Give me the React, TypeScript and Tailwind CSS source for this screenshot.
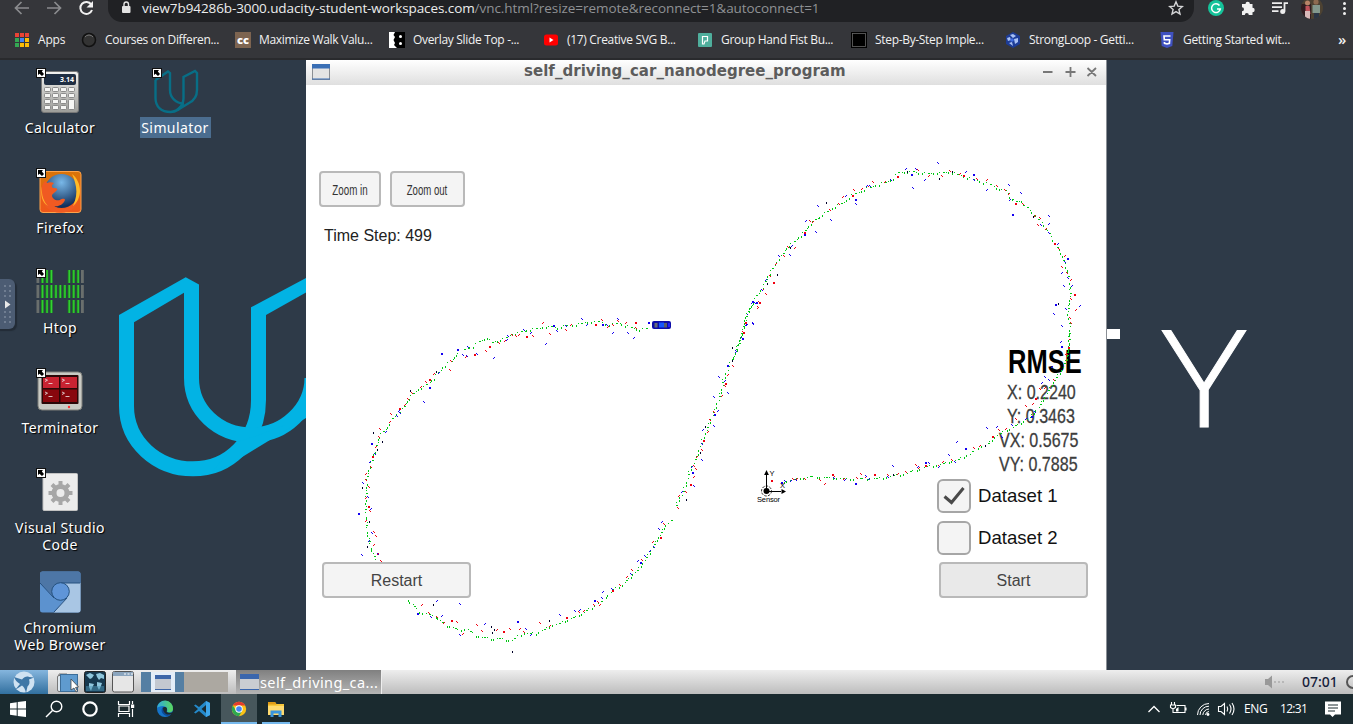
import React from "react";

/* ---------- trajectory data ---------- */
/* Each segment lists points in thirds of a pixel, measured from its origin. */
type Segment = {
  ox: number;
  oy: number;
  path: number[];
  lidar: number[];
  radar: number[];
  dark: number[];
};

const SEGMENTS: Segment[] = [
  {
    ox: 306,
    oy: 60,
    path: [476, 869, 500, 859, 511, 851, 527, 842, 543, 833, 560, 847, 583, 840, 601, 832, 620, 823, 655, 813, 690, 807, 720, 799, 755, 803, 800, 795, 845, 787, 878, 785, 910, 795, 940, 791, 975, 802, 1000, 809, 1030, 803],
    lidar: [550, 859, 581, 850, 599, 841, 620, 825, 632, 828, 640, 822, 661, 829, 681, 829, 712, 786, 733, 822, 780, 810, 796, 794, 868, 793, 888, 782, 906, 800, 922, 796, 938, 785, 962, 788, 989, 787, 992, 805],
    radar: [455, 867, 487, 862, 605, 837, 608, 828, 655, 810, 676, 817, 741, 795, 754, 813, 720, 851, 780, 799, 830, 779, 844, 793, 888, 792, 904, 797, 923, 818, 936, 778, 966, 819, 984, 833, 1026, 786],
    dark: [],
  },
  {
    ox: 720,
    oy: 60,
    path: [38, 898, 47, 878, 58, 850, 66, 820, 73, 790, 76, 770, 95, 738, 110, 708, 128, 682, 140, 658, 158, 625, 170, 605, 185, 588, 200, 565, 222, 545, 250, 520, 265, 497, 293, 475, 330, 450, 372, 426, 388, 412, 416, 396, 450, 382, 495, 367, 520, 355, 536, 338, 570, 335, 597, 338, 625, 342, 660, 338, 697, 337, 722, 347, 760, 358, 800, 370, 830, 384, 856, 393, 870, 410, 890, 425, 905, 424, 928, 450, 948, 472, 965, 488, 983, 512, 1003, 548, 1022, 578, 1035, 610, 1045, 640, 1051, 680, 1049, 720, 1043, 755, 1048, 790, 1048, 830, 1046, 860, 1042, 897],
    lidar: [71, 816, 79, 789, 114, 743, 118, 728, 140, 704, 130, 687, 160, 667, 151, 648, 169, 611, 192, 590, 205, 561, 225, 561, 253, 516, 272, 483, 280, 485, 331, 452, 359, 432, 371, 410, 396, 405, 404, 391, 426, 384, 445, 379, 461, 368, 496, 365, 531, 348, 595, 331, 629, 346, 666, 348, 692, 334, 721, 340, 729, 347, 772, 358, 802, 358, 833, 379, 855, 392, 869, 401, 886, 429, 911, 434, 945, 465, 960, 474, 954, 495, 979, 504, 1004, 551, 1018, 567, 1035, 585, 1027, 621, 1043, 641, 1054, 659, 1062, 704, 1054, 719, 1069, 748, 1052, 774, 1054, 790, 1047, 839, 1046, 863, 1039, 885],
    radar: [68, 834, 48, 873, 81, 793, 99, 792, 82, 763, 96, 726, 108, 728, 127, 692, 138, 657, 179, 590, 212, 585, 218, 555, 254, 524, 288, 517, 260, 480, 294, 438, 333, 480, 378, 407, 405, 418, 408, 432, 441, 375, 450, 379, 513, 360, 559, 324, 573, 342, 588, 327, 615, 359, 580, 385, 655, 310, 738, 333, 761, 342, 762, 360, 803, 387, 867, 375, 903, 399, 872, 417, 878, 463, 963, 497, 987, 489, 987, 470, 987, 519, 1014, 551, 1042, 595, 1037, 606, 1027, 637, 1045, 655, 1033, 679, 1056, 677, 1007, 734, 1038, 747, 1080, 735, 1003, 764, 1027, 799, 1023, 845, 1023, 858],
    dark: [38, 862, 142, 670, 172, 644, 210, 563, 320, 427, 659, 355, 697, 334, 941, 470, 1015, 730, 561, 334],
  },
  {
    ox: 740,
    oy: 330,
    path: [987, 10, 987, 50, 982, 85, 965, 120, 935, 165, 915, 200, 895, 233, 870, 262, 835, 285, 800, 300, 770, 315, 745, 342, 715, 352, 690, 372, 655, 390, 600, 403, 560, 410, 530, 420, 500, 430, 460, 437, 420, 445, 380, 446, 320, 446, 270, 443, 220, 441, 190, 443, 150, 450, 125, 456],
    lidar: [93, 450, 160, 448, 171, 446, 197, 447, 241, 452, 255, 461, 276, 433, 283, 439, 312, 445, 351, 444, 365, 433, 379, 438, 403, 432, 446, 437, 475, 431, 499, 427, 530, 407, 538, 412, 555, 406, 599, 408, 610, 395, 638, 391, 703, 355, 720, 345, 756, 318, 779, 300, 799, 295, 828, 267, 858, 230, 880, 220, 885, 204, 900, 177, 915, 172, 943, 152, 981, 73],
    radar: [124, 456, 137, 455, 155, 451, 168, 451, 284, 444, 315, 447, 345, 459, 378, 438, 389, 445, 446, 442, 460, 410, 534, 408, 557, 398, 568, 401, 597, 408, 627, 377, 645, 396, 651, 335, 675, 356, 741, 296, 771, 288, 786, 321, 817, 285, 860, 266, 874, 260, 886, 248, 908, 156, 916, 142, 928, 150, 936, 108],
    dark: [736, 346, 460, 434],
  },
  {
    ox: 630,
    oy: 300,
    path: [368, 8, 352, 42, 345, 70, 335, 100, 325, 132, 315, 160, 300, 190, 292, 210, 280, 240, 274, 275, 265, 300, 255, 330, 240, 365, 227, 400, 213, 430, 205, 462, 190, 490, 175, 525, 168, 555, 155, 585, 142, 608, 137, 625],
    lidar: [388, 8, 385, 23, 350, 68, 341, 97, 309, 198, 294, 224, 285, 250, 285, 259, 278, 285, 253, 337, 241, 362, 234, 395, 221, 420, 216, 450, 201, 470, 192, 498, 200, 507, 193, 528, 180, 554, 170, 576, 147, 585, 144, 624],
    radar: [366, 5, 377, 11, 350, 73, 370, 71, 338, 115, 320, 154, 291, 197, 269, 233, 286, 241, 294, 279, 252, 291, 266, 332, 253, 342, 252, 378, 219, 388, 217, 432, 216, 480, 186, 499, 186, 516, 192, 558, 156, 573],
    dark: [308, 143, 307, 182, 227, 380, 211, 458, 169, 599],
  },
  {
    ox: 306,
    oy: 350,
    path: [1095, 513, 1078, 525, 1062, 555, 1045, 585, 1022, 622, 1000, 655, 975, 680, 950, 705, 920, 720, 885, 755, 850, 778, 810, 800, 770, 817, 730, 830, 690, 850, 655, 850, 635, 858, 617, 872, 590, 868, 545, 865, 510, 857, 485, 838, 455, 840, 415, 823, 390, 800, 340, 785, 305, 750, 260, 700, 215, 640, 200, 610, 190, 575, 183, 535, 180, 490, 179, 450, 181, 410, 185, 370, 195, 340, 210, 295, 220, 260, 245, 230, 265, 200, 290, 178, 310, 145, 330, 123, 355, 110, 385, 85, 410, 52, 435, 35, 450, 15, 465, 8],
    lidar: [505, 13, 540, 3, 480, 18, 435, 34, 432, 62, 384, 69, 369, 87, 360, 98, 345, 108, 319, 130, 308, 149, 297, 164, 281, 174, 256, 194, 254, 213, 222, 237, 220, 261, 211, 290, 200, 320, 195, 351, 180, 370, 181, 390, 191, 413, 182, 442, 186, 468, 192, 485, 182, 512, 204, 548, 212, 560, 206, 582, 213, 609, 225, 635, 348, 763, 369, 791, 394, 801, 416, 817, 435, 812, 453, 816, 472, 850, 513, 825, 528, 843, 573, 839, 592, 844, 613, 839, 643, 836, 656, 847, 704, 821, 732, 826, 781, 802, 820, 787, 836, 780, 866, 767, 877, 757, 883, 763, 920, 722, 942, 707, 963, 678, 980, 662, 1008, 632, 1042, 573, 1064, 562, 1076, 524],
    radar: [407, 11, 513, 12, 564, 23, 471, 17, 485, 20, 399, 66, 371, 111, 356, 157, 281, 180, 284, 191, 275, 200, 240, 244, 197, 279, 209, 312, 194, 333, 173, 400, 188, 441, 197, 474, 158, 491, 198, 551, 190, 570, 170, 615, 218, 614, 393, 750, 335, 789, 377, 801, 410, 797, 464, 763, 462, 855, 539, 821, 635, 813, 660, 837, 677, 853, 762, 797, 807, 784, 822, 777, 866, 751, 888, 746, 891, 723, 920, 717, 975, 672, 996, 632, 1003, 638, 1017, 620, 1032, 600, 1044, 591, 1059, 537, 1068, 513],
    dark: [390, 63, 312, 122, 203, 247, 229, 274, 213, 298, 168, 412, 190, 514, 184, 589, 383, 762, 557, 829, 566, 837, 560, 848, 620, 903, 730, 812],
  },
];

const OX = 306;
const OY = 85;

function pairs(a: number[]): [number, number][] {
  const out: [number, number][] = [];
  for (let i = 0; i < a.length; i += 2) out.push([a[i], a[i + 1]]);
  return out;
}

function greenDots(seg: Segment): string {
  const pts = pairs(seg.path);
  let d = "";
  let n = 0;
  for (let i = 0; i < pts.length - 1; i++) {
    const [x0, y0] = pts[i];
    const [x1, y1] = pts[i + 1];
    const steps = Math.max(1, Math.round(Math.hypot(x1 - x0, y1 - y0) / 9.6));
    for (let k = 0; k < steps; k++) {
      n++;
      const jx = ((n * 7) % 5) - 2;
      const jy = ((n * 11) % 5) - 2;
      const x = seg.ox - OX + Math.floor((x0 + ((x1 - x0) * k) / steps + jx) / 3);
      const y = seg.oy - OY + Math.floor((y0 + ((y1 - y0) * k) / steps + jy) / 3);
      d += n % 5 === 1 ? `M${x} ${y}h2v1h-2z` : `M${x} ${y}h1v${n % 5 < 3 ? 1 : 2}h-1z`;
    }
  }
  return d;
}

function measureDots(seg: Segment, a: number[]): string {
  return pairs(a)
    .map(([px, py], i) => {
      const x = seg.ox - OX + Math.floor(px / 3);
      const y = seg.oy - OY + Math.floor(py / 3);
      if (i % 6 === 0) return `M${x} ${y}h2v2h-2z`;
      if (i % 3 === 2) return `M${x} ${y}h1v1h-1zM${x - 1} ${y + 1}h1v1h-1z`;
      return `M${x} ${y}h1v1h-1zM${x - 1} ${y - 1}h1v1h-1z`;
    })
    .join("");
}

function Track() {
  return (
    <svg className="pointer-events-none absolute inset-0" width="800" height="585" viewBox="0 0 800 585" shapeRendering="crispEdges">
      {SEGMENTS.map((s, i) => (
        <g key={i}>
          <path d={greenDots(s)} fill="#00c814" />
          <path d={measureDots(s, s.lidar)} fill="#f00010" />
          <path d={measureDots(s, s.radar)} fill="#1400f0" />
          <path d={pairs(s.dark).map(([x, y]) => `M${s.ox - OX + Math.floor(x / 3)} ${s.oy - OY + Math.floor(y / 3)}h1v2h-1z`).join("")} fill="#000028" />
        </g>
      ))}
      {/* vehicle */}
      <g shapeRendering="auto">
        <rect x="346" y="236" width="19" height="8" rx="2" fill="#0c0ca8" />
        <rect x="348.500" y="238" width="3" height="4.500" fill="#666a76" />
        <rect x="353" y="237.500" width="5" height="5" fill="#1455ff" />
        <rect x="358" y="238" width="3" height="4.500" fill="#5a5e68" />
        <rect x="362" y="238" width="2" height="4" fill="#2020ff" />
      </g>
      {/* sensor origin */}
      <g shapeRendering="auto">
        <path d="M460.500 406V390M460 406.500h15" stroke="#000" strokeWidth="1" fill="none" />
        <path d="M460.500 385l2.400 5h-4.800zM480 406.500l-4.500-2.500v5z" fill="#000" />
        <circle cx="460.500" cy="406" r="3" fill="#000" />
        <circle cx="460.500" cy="406" r="5" fill="none" stroke="#000" strokeWidth=".8" strokeDasharray="2.500 1.200" />
        <text x="463.500" y="391" fontSize="7.500" fontFamily="Liberation Sans, sans-serif">Y</text>
        <text x="474" y="402.500" fontSize="7.500" fontFamily="Liberation Sans, sans-serif">X</text>
        <text x="451" y="417" fontSize="7.500" textLength="23" fontFamily="Liberation Sans, sans-serif">Sensor</text>
      </g>
    </svg>
  );
}

/* ---------- browser chrome ---------- */

function Ic({ children }: { children: React.ReactNode }) {
  return <svg width="16" height="16" viewBox="0 0 16 16" className="shrink-0">{children}</svg>;
}

function Browser() {
  const marks: [React.ReactNode, string][] = [
    [<Ic><circle cx="8" cy="8" r="6.500" fill="#333" stroke="#111" strokeWidth="1.500" /><path d="M4 5a5 5 0 0 1 8 0" stroke="#777" fill="none" /></Ic>, "Courses on Differen..."],
    [<Ic><rect width="16" height="16" fill="#7d6450" /><text x="2" y="11.500" fontSize="10" fontWeight="800" fill="#fff" fontFamily="Open Sans, sans-serif" textLength="12" lengthAdjust="spacingAndGlyphs">cc</text></Ic>, "Maximize Walk Valu..."],
    [<Ic><rect width="16" height="16" fill="#000" /><path d="M0 0h6l-1.500 3L6 5 4.500 8 6 11l-1 2 3 3H0z" fill="#fff" /><circle cx="11.500" cy="4.500" r="1.500" fill="#fff" /><circle cx="11.500" cy="11.500" r="1.500" fill="#fff" /></Ic>, "Overlay Slide Top -..."],
    [<Ic><rect x="1" y="2.500" width="14" height="11" rx="2.500" fill="#f00" /><path d="M6.500 5.500v5L10.500 8z" fill="#fff" /></Ic>, "(17) Creative SVG B..."],
    [<Ic><rect x="1" y="1" width="14" height="14" rx="1" fill="#4fae9c" /><path d="M5.500 12V4.500h5V9H8l-1 3z" fill="none" stroke="#fff" strokeWidth="1.200" /></Ic>, "Group Hand Fist Bu..."],
    [<Ic><rect x=".5" y=".5" width="15" height="15" fill="#000" stroke="#000" /><rect x="1.500" y="1.500" width="13" height="13" fill="#000" stroke="#666" strokeWidth=".8" /></Ic>, "Step-By-Step Imple..."],
    [<Ic><path d="M8 0l7 4v8l-7 4-7-4V4z" fill="#1d3c96" /><path d="M5 3l3-1 3 2-3 2zM2 6l3-1 1 3-3 1zM9 7l4-1v4l-3 2zM4 11l3-1 1 4z" fill="#a8c0f4" /><circle cx="7" cy="8" r="1.800" fill="#3f6be0" /></Ic>, "StrongLoop - Getti..."],
    [<Ic><path d="M1.500 0h13l-1.200 14L8 16l-5.300-2z" fill="#3f51c0" /><path d="M11.500 4H5l.3 3.800h5.400l-.3 3.500L8 12l-2.500-.700-.1-1.300" stroke="#fff" strokeWidth="1.600" fill="none" /></Ic>, "Getting Started wit..."],
  ];
  return (
    <header className="flex h-[60px] shrink-0 flex-col overflow-hidden border-b-2 border-[#292a2d] bg-[#35363a] text-white">
      <div className="flex h-[22px] shrink-0 items-start">
        <svg width="108" height="22" viewBox="0 0 108 22" className="shrink-0" fill="none" strokeWidth="1.700">
          <path d="M29 8H16M21.500 2l-6 6 6 6M47 8h13M54.500 2l6 6-6 6" stroke="#8a8b8e" />
          <path d="M91.300 4.500A6 6 0 1 0 92 10" stroke="#f1f1f1" strokeWidth="2" />
          <path d="M93 1v6.500h-6.500z" fill="#f1f1f1" />
        </svg>
        <div className="flex h-[22px] w-[1086px] shrink-0 items-start justify-between rounded-b-[14px] bg-[#202124] pl-3 pr-2.5">
          <div className="flex items-start">
            <svg width="12" height="16" viewBox="0 0 12 16"><rect x="2" y="6" width="8.500" height="7" rx="1" fill="#e3e3e3" /><path d="M4 6.500V4.300a2.200 2.200 0 0 1 4.500 0v2.200" stroke="#e3e3e3" strokeWidth="1.400" fill="none" /></svg>
            <p className="ml-2.5 h-4 whitespace-nowrap font-['Open_Sans',sans-serif] text-[13.5px] leading-[16px] tracking-[-0.06px] text-[#8f9194]">
              <span className="tracking-[-0.09px] text-[#eceded]">view7b94286b-3000.udacity-student-workspaces.com</span>/vnc.html?resize=remote&amp;reconnect=1&amp;autoconnect=1
            </p>
          </div>
          <svg width="16" height="16" viewBox="0 0 16 16"><path d="M8 1.800l1.800 4.300 4.600.4-3.500 3 1.100 4.500L8 11.600 4 14l1.100-4.500-3.500-3 4.600-.4z" fill="none" stroke="#d5d6d8" strokeWidth="1.400" /></svg>
        </div>
        <svg width="159" height="22" viewBox="1194 0 159 22" className="shrink-0">
          <circle cx="1216" cy="8" r="8" fill="#15c39a" />
          <path d="M1219.500 5.500a4.400 4.400 0 1 0 .8 3.500h-3.300" fill="none" stroke="#fff" strokeWidth="1.500" />
          <path d="M1242 4h3.500a2.200 2.200 0 0 1 4.400 0h2.600v3.800a2.200 2.200 0 0 1 0 4.400V15h-3.700a2 2 0 0 0-4 0H1242v-3.700a2 2 0 0 0 0-4z" fill="#f1f1f1" />
          <path d="M1272 3.200h10M1272 7.200h10M1272 11.200h6.500" stroke="#eee" strokeWidth="1.800" />
          <path d="M1284.500 11.500V3.200h3.500" stroke="#eee" strokeWidth="1.800" fill="none" /><circle cx="1282.700" cy="11.500" r="2.500" fill="#eee" />
          <clipPath id="ava"><circle cx="1312" cy="8" r="11" /></clipPath>
          <g clipPath="url(#ava)">
            <rect x="1300" width="24" height="20" fill="#4d4232" />
            <rect x="1301" y="4" width="10" height="15" fill="#301c20" />
            <circle cx="1307.500" cy="3" r="2.500" fill="#b98468" /><path d="M1305.500 6h4l1 8h-5z" fill="#c0525a" /><path d="M1305 11h5v8h-5z" fill="#d8b9b9" />
            <circle cx="1316" cy="2" r="2.600" fill="#8d6b50" /><path d="M1312.500 5h7.500v8h-7.500z" fill="#83988c" /><path d="M1314 13h5v6h-5z" fill="#2a3545" />
          </g>
          <g fill="#f1f1f1"><circle cx="1344.500" cy="3.500" r="1.500" /><circle cx="1344.500" cy="8.500" r="1.500" /><circle cx="1344.500" cy="13.500" r="1.500" /></g>
        </svg>
      </div>
      <nav className="flex h-9 items-center font-['Open_Sans',sans-serif] text-[12px] leading-4 text-[#f1f1f1]">
        <div className="flex w-[81px] shrink-0 items-center gap-[9px] pl-[15px]">
          <svg width="14" height="14" viewBox="0 0 14 14">
            <path d="M0 0h4v4H0zM5 0h4v4H5zM10 0h4v4h-4z" fill="#ea4335" />
            <path d="M0 5h4v4H0zM0 10h4v4H0z" fill="#34a853" /><path d="M5 5h4v4H5z" fill="#4285f4" /><path d="M10 5h4v4h-4zM5 10h4v4H5zM10 10h4v4h-4z" fill="#fbbc05" />
          </svg>
          <span className="tracking-[-0.2px]">Apps</span>
        </div>
        {marks.map(([icon, label]) => (
          <a key={label} className="flex w-[154px] shrink-0 items-center gap-2">
            {icon}
            <span className="whitespace-nowrap tracking-[-0.32px]">{label}</span>
          </a>
        ))}
        <span className="ml-[25px] pb-0.5 text-[15px] font-semibold leading-4">»</span>
      </nav>
    </header>
  );
}

/* ---------- desktop ---------- */

function Shortcut() {
  return (
    <svg width="10" height="10" viewBox="0 0 10 10" className="absolute left-0 top-0">
      <rect width="10" height="10" fill="#fff" /><rect x=".5" y=".5" width="9" height="9" fill="none" stroke="#111" />
      <path d="M2 2h5L5.800 3.500 8 6 6 8 3.500 5.800 2 7z" fill="#000" />
    </svg>
  );
}

function Item({ label, link = true, selected = false, children }: { label: string; link?: boolean; selected?: boolean; children: React.ReactNode }) {
  return (
    <div className="flex h-[100px] w-[116px] flex-col items-center">
      <div className="relative h-[49px] w-12 shrink-0">
        <svg width="48" height="48" viewBox="0 0 48 48">{children}</svg>
        {link && <Shortcut />}
      </div>
      <p
        className={
          selected
            ? "mr-0.5 flex h-[21px] w-[71px] items-center justify-center bg-[#4b6d8f] font-['Noto_Sans',sans-serif] text-[14px] leading-[17px] tracking-[0.400px] text-white"
            : "whitespace-pre pt-0.5 text-center font-['Noto_Sans',sans-serif] text-[14px] leading-[17px] tracking-[0.400px] text-white [text-shadow:1px_1px_1px_#000]"
        }
      >
        {label}
      </p>
    </div>
  );
}

function Desktop() {
  return (
    <>
      <svg className="absolute left-0 top-0" width="306" height="610" viewBox="0 60 306 610">
        <g fill="none" stroke="#02b3e4" strokeWidth="15">
          <path d="M126.500 325V406C126.500 442 157 468.800 193 468.800S258.500 440 258.500 400V315" />
          <path d="M191.500 296V378C191.500 410 218 435 251.500 435S312 408 312 378" />
        </g>
        <path d="M119 315L185.700 277.300 199 284.500V300H184V292.700L134 322.300V330H119z" fill="#02b3e4" />
        <path d="M251 307.300L306 278V292.500L266 315V320H251z" fill="#02b3e4" />
        <path d="M237 442L256 436 285 425 306 404V418L230 464.500 212 472z" fill="#02b3e4" />
      </svg>
      <div className="absolute left-[1107px] top-[269px] h-2.5 w-[13px] bg-white" />
      <span className="absolute left-[1162px] top-[215px] block origin-left scale-x-[1.180] font-['Open_Sans',sans-serif] text-[135px] font-light leading-[200px] text-white [-webkit-text-stroke:0.8px_white]">Y</span>

      <div className="absolute left-[2px] top-2 flex">
        <div className="flex flex-col">
          <Item label="Calculator">
            <defs><linearGradient id="cg" x2="0" y2="1"><stop stopColor="#f2f2f0" /><stop offset="1" stopColor="#9c9c98" /></linearGradient></defs>
            <rect x="5.500" y="3.500" width="37" height="41" rx="2.500" fill="url(#cg)" stroke="#777" />
            <rect x="8" y="6" width="32" height="11" rx="2" fill="#1f2e42" />
            <text x="24" y="14" fontSize="7" fontWeight="700" fill="#fff" fontFamily="Open Sans, sans-serif">3.14</text>
            {[0, 1, 2, 3].map((r) => [0, 1, 2, 3].map((c) => (r === 3 && c === 3 ? null : (
              <rect key={`${r}${c}`} x={8.5 + c * 8} y={19.5 + r * 6} width="6" height={r === 2 && c === 3 ? 10 : 4} rx="1" fill="#f6f6f4" stroke="#777" strokeWidth=".8" />
            ))))}
          </Item>
          <Item label="Firefox">
            <defs>
              <linearGradient id="fg" x2="0" y2="1"><stop stopColor="#d97408" /><stop offset="1" stopColor="#f0561b" /></linearGradient>
              <radialGradient id="fb" cx=".5" cy=".25" r=".7"><stop stopColor="#79b8e8" /><stop offset="1" stopColor="#12305c" /></radialGradient>
            </defs>
            <rect x="4" y="3.500" width="41" height="41" rx="3" fill="url(#fg)" stroke="#ffa24a" />
            <circle cx="25.500" cy="23" r="17" fill="url(#fb)" />
            <path d="M5 22c1-5 3-8 4-9l2 2c2-1 5-1 7 0-2 2-3 3-1 5 4 0 5 1 4 2-1 2-4 3-5 5 0 4 4 6 8 5 3-2 5-1 5 0-2 5-7 7-11 6 6 5 15 3 20-3 3-5 4-9 3-15 3 8 2 15-3 20-8 7-21 6-28-1C6 34 4 28 5 22z" fill="#f05a22" />
            <path d="M36 6c5 4 8 10 8 17 0 6-3 12-7 15 3-7 4-13 3-19-1-5-2-9-4-13z" fill="#ffbb28" />
            <path d="M6 18c-1 9 2 16 6 20-6-3-8-12-6-20z" fill="#ffb52a" />
          </Item>
          <Item label="Htop">
            <defs><linearGradient id="hg"><stop stopColor="#17701b" /><stop offset=".6" stopColor="#33d633" /><stop offset="1" stopColor="#1f9a22" /></linearGradient></defs>
            {[2, 17, 32].map((y) => [0, 1, 2, 3, 4, 5, 6, 7, 8, 9, 10].map((i) => {
              if (y !== 17 && i > 3 && i < 7) return null;
              const edge = i === 0 || i === 10;
              return <rect key={`${y}-${i}`} x={0.5 + i * 4.45} y={y} width="2.800" height="13" fill={edge ? "#6a6f6d" : "url(#hg)"} />;
            }))}
          </Item>
          <Item label="Terminator">
            <rect x="2" y="4" width="44" height="38" rx="4" fill="#c9cac4" stroke="#7c7d78" />
            <rect x="5.500" y="7" width="37" height="29" rx="1" fill="#2a0808" />
            <path d="M7 9h16v11H7zM24.500 9H41v11H24.500z" fill="#c92332" /><path d="M7 21.500h16V34H7zM24.500 21.500H41V34H24.500z" fill="#88070d" />
            <path d="M9 11l2.500 1.200L9 13.500M12.500 15.500h4M26 11l2.500 1.200-2.500 1.300M29.500 15.500h4M9 24l2.500 1.200L9 26.500M12.500 28.500h4M26 24l2.500 1.200-2.500 1.300M29.500 28.500h4" stroke="#eee" strokeWidth=".8" fill="none" />
            <circle cx="33" cy="39" r="1.200" fill="#f33" />
          </Item>
          <Item label={"Visual Studio\nCode"}>
            <rect x="7" y="5.500" width="34.500" height="37" rx="1" fill="#ececec" stroke="#c2c2c2" />
            <circle cx="24.500" cy="25" r="6.500" fill="none" stroke="#a7a7a7" strokeWidth="5" />
            <g stroke="#a7a7a7" strokeWidth="4"><path d="M24.500 13v4M24.500 33v4M12.500 25h4M32.500 25h4M16 16.500l3 3M30 30.500l3 3M33 16.500l-3 3M19 30.500l-3 3" /></g>
          </Item>
          <Item label={"Chromium\nWeb Browser"} link={false}>
            <rect x="4" y="3.500" width="40.500" height="41" rx="2.500" fill="#5c92cf" />
            <path d="M4 6q0-2.500 2.500-2.500H42q2.500 0 2.500 2.500v9H26L16 27 4 15z" fill="#4d76a6" />
            <path d="M25 15h19.500v27q0 2.500-2.500 2.500H18L32 28z" fill="#a9c6e4" />
            <path d="M4 15l14 15M44 15H25M31 30L18 44" stroke="#27507f" />
            <circle cx="24.500" cy="23.500" r="8.800" fill="#5f95d8" stroke="#24517f" />
          </Item>
        </div>
        <Item label="Simulator" selected>
          <g fill="none" stroke="#086e86" strokeWidth="2.400">
            <path d="M3.500 12L16 3.500 18 5V22c0 8 6 13 14 14M3.500 12V30c0 9 6 14 15 14 3 0 5-.5 7-2L37 35c6-3 8-7 8-13V5L43 3 31.500 9V30c0 7-5 13-13 14" />
            <path d="M25.500 42L31 37" strokeWidth="3" />
          </g>
        </Item>
      </div>

      <div className="absolute -left-2 top-[219px] flex h-[50px] w-[23px] items-center justify-end rounded-md bg-[#4c5c73] shadow-[2px_2px_1px_#232c37]">
        <svg width="15" height="50" viewBox="0 0 15 50">
          {[7, 12, 17, 33, 38, 43].map((y) => <path key={y} d={`M4 ${y}h2M9 ${y}h2`} stroke="#6f7d91" strokeWidth="2" />)}
          <path d="M5 21.500l5.500 4L5 29.500z" fill="#e8e8e8" />
        </svg>
      </div>
    </>
  );
}

/* ---------- simulator window ---------- */

function Btn({ className, children }: { className: string; children: React.ReactNode }) {
  return (
    <button className={`relative z-10 flex h-9 items-center justify-center rounded-[4px] border-2 border-[#b9b9b9] pt-px font-['Liberation_Sans',Arial,sans-serif] ${className}`}>
      {children}
    </button>
  );
}

function Check({ label, on }: { label: string; on?: boolean }) {
  return (
    <label className="flex h-[42px] items-center gap-[7px] font-['Liberation_Sans',Arial,sans-serif] text-[18.6px] leading-none text-[#111]">
      <span className="flex size-[34px] items-center justify-center rounded-[6px] border-2 border-[#a6a6a6] bg-[#f4f4f4]">
        {on && <svg width="24" height="22" viewBox="0 0 24 22"><path d="M2.500 11.500l7 6L21.500 3" fill="none" stroke="#4a4a4a" strokeWidth="3" /></svg>}
      </span>
      {label}
    </label>
  );
}

const METRICS = [
  { text: "X: 0.2240", inset: "ml-[70px]" },
  { text: "Y: 0.3463", inset: "ml-[70px]" },
  { text: "VX: 0.5675", inset: "ml-[62px]" },
  { text: "VY: 0.7885", inset: "ml-[62px]" },
];

function SimWindow() {
  return (
    <section className="absolute left-[306px] top-0 flex h-[610px] w-[800px] flex-col overflow-hidden bg-white shadow-[1px_0_0_#8a8f95]">
      <div className="flex h-[25px] shrink-0 items-center bg-linear-to-b from-white to-[#dfdfdf] pb-0.5 pl-1.5 pr-[7px]">
        <svg width="18" height="18" viewBox="0 0 18 18"><rect x=".5" y="1.500" width="17" height="15" fill="#e4e4e4" stroke="#8b8f94" /><rect x="0" y="1" width="18" height="4.500" fill="#3a6fb5" /><path d="M0 16h18" stroke="#3a6fb5" /></svg>
        <h1 className="ml-[194px] whitespace-nowrap font-['DejaVu_Sans',sans-serif] text-[15px] font-bold leading-none tracking-[0.04px] text-[#5c5c5c]">self_driving_car_nanodegree_program</h1>
        <svg className="ml-auto" width="56" height="14" viewBox="0 0 56 14" fill="none" stroke="#777" strokeWidth="1.800"><path d="M0 7h9.500M22.500 7h10M27.500 2v10M44.500 3l8.500 8M53 3l-8.500 8" /></svg>
      </div>
      <div className="relative flex h-[585px] justify-between font-['Liberation_Sans',Arial,sans-serif]">
        <div className="flex flex-col pl-[13px] pt-[86px]">
          <div className="flex gap-[9px] text-[15.5px] text-[#333]">
            <Btn className="w-[62px] bg-[#f4f4f4]"><span className="block w-[56px] shrink-0 scale-x-[0.630] whitespace-nowrap">Zoom in</span></Btn>
            <Btn className="w-[75px] bg-[#f4f4f4]"><span className="mr-0.5 block w-[66px] shrink-0 scale-x-[0.620] whitespace-nowrap">Zoom out</span></Btn>
          </div>
          <p className="ml-[5px] mt-[19px] h-5 text-[16px] leading-5 text-[#222]">Time Step: 499</p>
          <Btn className="ml-[3px] mt-[316px] w-[149px] bg-[#f4f4f4] text-[16px] text-[#444]">Restart</Btn>
        </div>
        <div className="flex w-[169px] flex-col pt-[258px]">
          <h2 className="ml-[71px] h-9 origin-left scale-x-[0.750] whitespace-nowrap text-[34px] font-bold leading-9 text-black">RMSE</h2>
          <div className="mt-px flex flex-col">
            {METRICS.map((m) => (
              <p key={m.text} className={`h-6 origin-left scale-x-[0.765] whitespace-nowrap text-[21px] leading-6 text-[#3d3d3d] [-webkit-text-stroke:0.300px_#3d3d3d] ${m.inset}`}>{m.text}</p>
            ))}
          </div>
          <div className="-mt-px flex flex-col">
            <Check label="Dataset 1" on />
            <Check label="Dataset 2" />
          </div>
          <Btn className="ml-0.5 mt-[3px] w-[149px] bg-[#e9e9e9] text-[16px] text-[#444]">Start</Btn>
        </div>
        <Track />
      </div>
    </section>
  );
}

/* ---------- panels ---------- */

function LxPanel() {
  return (
    <div className="flex h-6 shrink-0 items-stretch justify-between bg-linear-to-b from-[#eeeeee] to-[#bdbdbd]">
      <div className="flex">
        <div className="flex w-12 items-center justify-center bg-linear-to-b from-[#85b6de] to-[#31709f]">
          <svg width="24" height="22" viewBox="0 0 24 22"><circle cx="12" cy="11" r="10.500" fill="#cfe2f2" /><path d="M2 6l8 2.500C12 6 15 5 17 6l5 .5-5 2c1 3 .5 5-1.500 7L14 22c-1-4-2-6-4-7.500L3 19l5-6C5 11 3 9 2 6z" fill="#3d76a6" /></svg>
        </div>
        <svg width="93" height="24" viewBox="48 0 93 24">
          <path d="M59 4h8v3H59z" fill="#eee" stroke="#777" /><rect x="57.500" y="5.500" width="20" height="16" rx="1.500" fill="#dfe8ef" stroke="#777" /><rect x="60.500" y="4.500" width="17" height="17" fill="#5f9bcf" stroke="#3c6d98" />
          <path d="M71 9v11l3-2 2 4 1.500-1-2-3.500 3-.5z" fill="#fff" stroke="#444" strokeWidth=".8" />
          <rect x="84.500" y="1.500" width="21" height="21" rx="2" fill="#16384e" stroke="#222" />
          <path d="M86 5l4-2 4 2-2 3-2 1-3-3zM96 4l4-1 4 2v4l-3-1-2 2-2-3zM89 13l5 1-2 4-1 3-2-4zM97 12l5 1-1 3-2 4-2-4z" fill="#8fc6dc" />
          <path d="M86 16h18v5H86z" fill="#4f97b8" opacity=".5" />
          <rect x="112.500" y="1.500" width="21" height="20.500" rx="2" fill="#e6e6e6" stroke="#555" /><path d="M113 2h20v4h-20z" fill="#8ba5be" /><path d="M124 4h2M127.500 4h2M131 4h2" stroke="#fff" />
        </svg>
        <div className="my-0.5 flex w-[87px]">
          <div className="flex w-[43px] justify-center bg-[#557fa3]">
            <div className="flex w-6 items-center justify-center bg-[#e4edf7]"><svg width="16" height="15" viewBox="0 0 16 15"><rect width="16" height="15" fill="#c3c8d0" /><rect width="16" height="4" fill="#3d66a8" /><path d="M0 14.500h16" stroke="#3d66a8" /></svg></div>
          </div>
          <div className="flex-1 bg-[#aca8a1]" />
        </div>
        <div className="ml-2 flex w-[146px] items-center gap-px border-r border-[#eee] bg-linear-to-b from-[#808080] to-[#b5b5b5] pl-1">
          <svg width="19" height="18" viewBox="0 0 19 18" className="shrink-0"><rect y="1" width="19" height="16" fill="#cacdd2" /><rect y="1" width="19" height="5" fill="#3a66ad" /><path d="M0 16.500h19" stroke="#3a66ad" /></svg>
          <span className="whitespace-nowrap font-['Noto_Sans',sans-serif] text-[14.5px] leading-4 tracking-[0.400px] text-white">self_driving_ca...</span>
        </div>
      </div>
      <div className="flex items-center">
        <svg width="24" height="14" viewBox="0 0 24 14"><path d="M2 4h3l4-3.500v13L5 10H2z" fill="#999" /><path d="M11 7h2M15 7h2M19 7h2" stroke="#999" /></svg>
        <span className="ml-[15px] w-[43px] whitespace-nowrap font-['Noto_Sans',sans-serif] text-[14px] font-medium leading-4 text-[#16213a]">07:01</span>
        <svg width="8" height="16" viewBox="0 0 8 16"><circle cx="8" cy="8" r="6" fill="none" stroke="#555" strokeWidth="2" /></svg>
      </div>
    </div>
  );
}

function WinBar() {
  return (
    <footer className="flex h-[30px] shrink-0 justify-between bg-[#1a2a2f]">
      <svg width="292" height="30" viewBox="0 0 292 30">
        <rect x="221" width="36" height="30" fill="#47575c" />
        <path d="M221 28h36v2h-36zM262 28h28v2h-28z" fill="#76b9ed" />
        <path d="M10 9.200l6.700-1V14.500H10zM17.700 8L26 7v7.500h-8.300zM10 15.500h6.700v6.300l-6.700-1zM17.700 15.500H26V23l-8.300-1z" fill="#fff" />
        <g fill="none" stroke="#fff"><circle cx="56.500" cy="12.500" r="5.300" strokeWidth="1.400" /><path d="M52.500 16.500L46 23" strokeWidth="1.500" /><circle cx="90" cy="15" r="6.700" strokeWidth="2.200" /></g>
        <g fill="none" stroke="#fff" strokeWidth="1.200"><path d="M118.500 7v3.500h11V7M118.500 23v-3.500h11V23M119 12h10v5.500h-10zM132.500 7v3M132.500 15v8" /></g><rect x="131" y="10.500" width="3.200" height="3.500" fill="#fff" />
        <defs><linearGradient id="eg"><stop stopColor="#2ea7e0" /><stop offset="1" stopColor="#5bd85b" /></linearGradient></defs>
        <circle cx="165" cy="15" r="8" fill="#1574c9" />
        <path d="M157 14a8 8 0 0 1 16 1c0 3-3 4-6 3 1-2 0-6-4-6-3 0-5 1-6 2z" fill="url(#eg)" />
        <path d="M163 13c-3 3-1 8 4 9 2 0 3-1 4-2-3 1-7-1-7-4z" fill="#0c4a98" />
        <path d="M163 14c0-1.500 4-1.500 4 1s-1 3 1 3.500c2 .5 4 0 5-.5l-1 2c-4 1.500-9 0-9-6z" fill="#1a2a2f" />
        <path d="M206 7l4 2v12l-4 2-7-6-3.500 2.500-1.500-1 4-3.500-4-3.500 1.500-1L199 13zM206 11l-4.500 4 4.500 4z" fill="#2489ca" fillRule="evenodd" /><path d="M206 7l4 2v12l-4 2z" fill="#3ea6ea" />
        <circle cx="239" cy="15" r="7.200" fill="#fbc116" />
        <path d="M232.800 11.400a7.200 7.200 0 0 1 12.400 0H239z" fill="#e33b2e" /><path d="M232.800 11.400A7.200 7.200 0 0 0 239 22.200l3-5.200-6-.5z" fill="#2da94f" />
        <circle cx="239" cy="15" r="3.700" fill="#fff" /><circle cx="239" cy="15" r="2.800" fill="#4285f4" />
        <path d="M268 8h7l1.500 2H284v11h-16z" fill="#f7c73b" /><path d="M268 8h7l1.500 2.500H268z" fill="#e09b15" /><path d="M268 12h16v9h-16z" fill="#ffdb70" /><path d="M270.500 23v-6.500h11V23h-3v-3.500h-5V23z" fill="#3a96dd" />
      </svg>
      <div className="flex items-center font-['Open_Sans',sans-serif] text-[12px] leading-4 text-white">
        <svg width="96" height="30" viewBox="1146 0 96 30" fill="none" stroke="#fff" strokeWidth="1.300">
          <path d="M1148.500 18l5.500-5.500 5.500 5.500" />
          <path d="M1176.500 11.500h8.500v7h-10.500M1186 13.500v3M1171.500 8v3M1174.500 8v3M1170.500 11h5v2.500l-2.500 1.500-2.500-1.500zM1173 15v3.500h2" strokeWidth="1.100" /><path d="M1178.500 13v4.500h-2.500V15z" fill="#fff" stroke="none" />
          <g strokeWidth="1"><path d="M1197.500 21a11.500 11.500 0 0 1 11.500-11.500M1200 21a9 9 0 0 1 9-8.800M1202.800 21a6.500 6.500 0 0 1 6.200-6M1205.500 21a4 4 0 0 1 3.500-3.500" /></g><circle cx="1208" cy="20.500" r="1.400" fill="#fff" stroke="none" />
          <path d="M1218.500 12.500h2.500l3.500-3v11l-3.500-3h-2.500zM1227 12.500q1.500 2.500 0 5M1229.500 10.500q3 4.500 0 9M1232 9q4 6 0 12" strokeWidth="1.100" />
        </svg>
        <span className="ml-0.5 w-9 tracking-[-0.4px]">ENG</span>
        <span className="w-[44px] tracking-[-0.7px]">12:31</span>
        <svg width="18" height="18" viewBox="0 0 18 18"><path d="M1 1.500h16v13H11L8.500 17 6 14.500H1z" fill="#fff" /><path d="M4 5h10M4 8h10M4 11h7" stroke="#1a2a2f" strokeWidth="1.100" /></svg>
        <div className="w-[11px]" />
      </div>
    </footer>
  );
}

export default function App() {
  return (
    <div className="flex h-[724px] w-[1353px] flex-col overflow-hidden bg-[#2e3a48]">
      <Browser />
      <main className="relative h-[610px] shrink-0 overflow-hidden">
        <Desktop />
        <SimWindow />
      </main>
      <LxPanel />
      <WinBar />
    </div>
  );
}
